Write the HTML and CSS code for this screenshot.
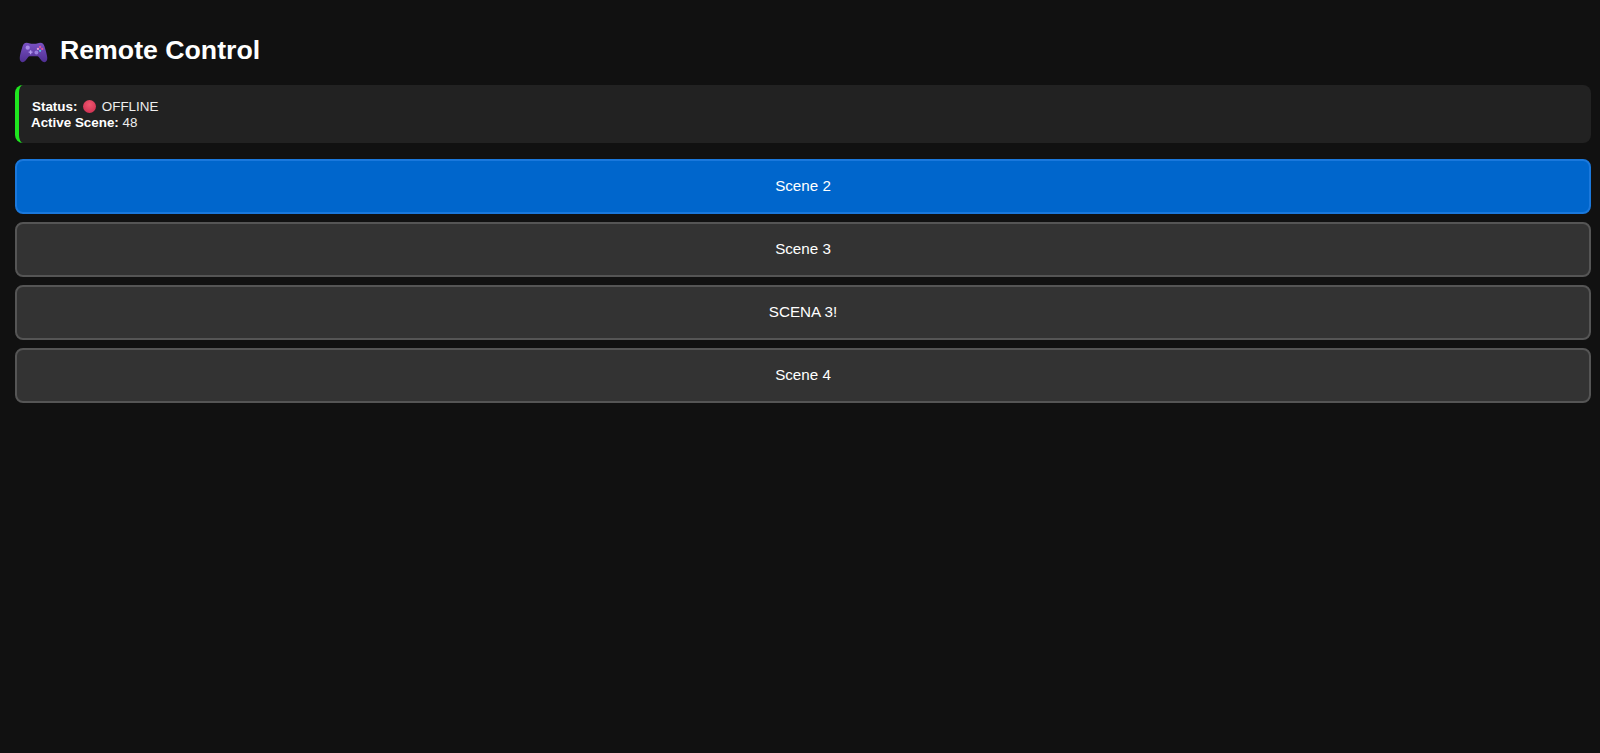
FILE: index.html
```html
<!DOCTYPE html>
<html lang="en">
<head>
<meta charset="utf-8">
<title>Remote Control</title>
<link rel="stylesheet" href="styles.css">
</head>
<body>
<h1 class="title">
<svg class="pad" viewBox="0 0 30 24" aria-hidden="true">
<defs><linearGradient id="padfill" x1="0" y1="0" x2="0" y2="1"><stop offset="0" stop-color="#7a52c4"/><stop offset="1" stop-color="#4f2f92"/></linearGradient></defs>
<path d="M8 2.500C5.500 2.500 4.300 4 3.600 6.300C2.500 10 1.200 14 .8 17.500C.5 20.500 1.600 22.500 3.700 22.500C6 22.500 7.400 20.200 9 18C9.800 16.900 10.500 16.500 11.800 16.500H18.200C19.500 16.500 20.200 16.900 21 18C22.600 20.200 24 22.500 26.300 22.500C28.400 22.500 29.500 20.500 29.200 17.500C28.800 14 27.500 10 26.400 6.300C25.700 4 24.500 2.500 22 2.500C20 2.500 19 3.500 17.500 3.500H12.500C11 3.500 10 2.500 8 2.500Z" fill="url(#padfill)"/>
<circle cx="9" cy="7.500" r="2.200" fill="#a98be8"/>
<path d="M10 11.500h1.300v-1.300h1.400v1.300H14v1.400h-1.300v1.300h-1.400v-1.300H10Z" fill="#b49cf0"/>
<circle cx="21.800" cy="6.800" r="1.200" fill="#e0559a"/>
<circle cx="19.600" cy="8.800" r="1.200" fill="#e8a0d8"/>
<circle cx="24" cy="8.800" r="1.200" fill="#e0559a"/>
<circle cx="21.800" cy="10.800" r="1.200" fill="#5cc0e8"/>
<circle cx="18" cy="12.500" r="2" fill="#9a7fe0"/>
</svg>
<span>Remote Control</span>
</h1>
<div class="status">
<div class="status-line"><strong class="status-label">Status:</strong> <span class="dot"></span> OFFLINE</div>
<div class="status-line"><strong>Active Scene:</strong> 48</div>
</div>
<div class="scenes">
<button class="scene active" type="button">Scene 2</button>
<button class="scene" type="button">Scene 3</button>
<button class="scene" type="button">SCENA 3!</button>
<button class="scene" type="button">Scene 4</button>
</div>
</body>
</html>
```
FILE: styles.css
```css
html, body {
  margin: 0;
  height: 100%;
}
body {
  background: #111111;
  color: #ffffff;
  font-family: "Liberation Sans", Arial, sans-serif;
  padding: 0 9px 0 15px;
  box-sizing: border-box;
  overflow: hidden;
}
.title {
  display: flex;
  align-items: center;
  gap: 12px;
  margin: 0;
  padding: 34px 0 19px 4px;
  font-size: 26.7px;
  line-height: 32px;
  font-weight: 700;
}
.pad {
  width: 29px;
  height: 24px;
  flex: none;
  margin-top: 3px;
}
.status {
  background: #222222;
  border-left: 4px solid #1fe61f;
  border-radius: 8px;
  padding: 14px 12px 13px;
  font-size: 13.4px;
  line-height: 15.5px;
  color: #eeeeee;
}
.status strong {
  color: #ffffff;
}
.status-label {
  margin-left: 1px;
}
.dot {
  display: inline-block;
  width: 13px;
  height: 13px;
  margin: 0 2px;
  vertical-align: -2px;
  border-radius: 50%;
  background: radial-gradient(circle at 50% 35%, #f0566f, #c92a4c);
}
.scenes {
  display: flex;
  flex-direction: column;
  gap: 8px;
  margin-top: 16px;
}
.scene {
  height: 55px;
  width: 100%;
  padding: 0 0 2px;
  background: #333333;
  border: 2px solid #555555;
  border-radius: 8px;
  color: #ffffff;
  font-family: inherit;
  font-size: 15.2px;
}
.scene.active {
  background: #0066cc;
  border-color: #1a78dc;
}
```
